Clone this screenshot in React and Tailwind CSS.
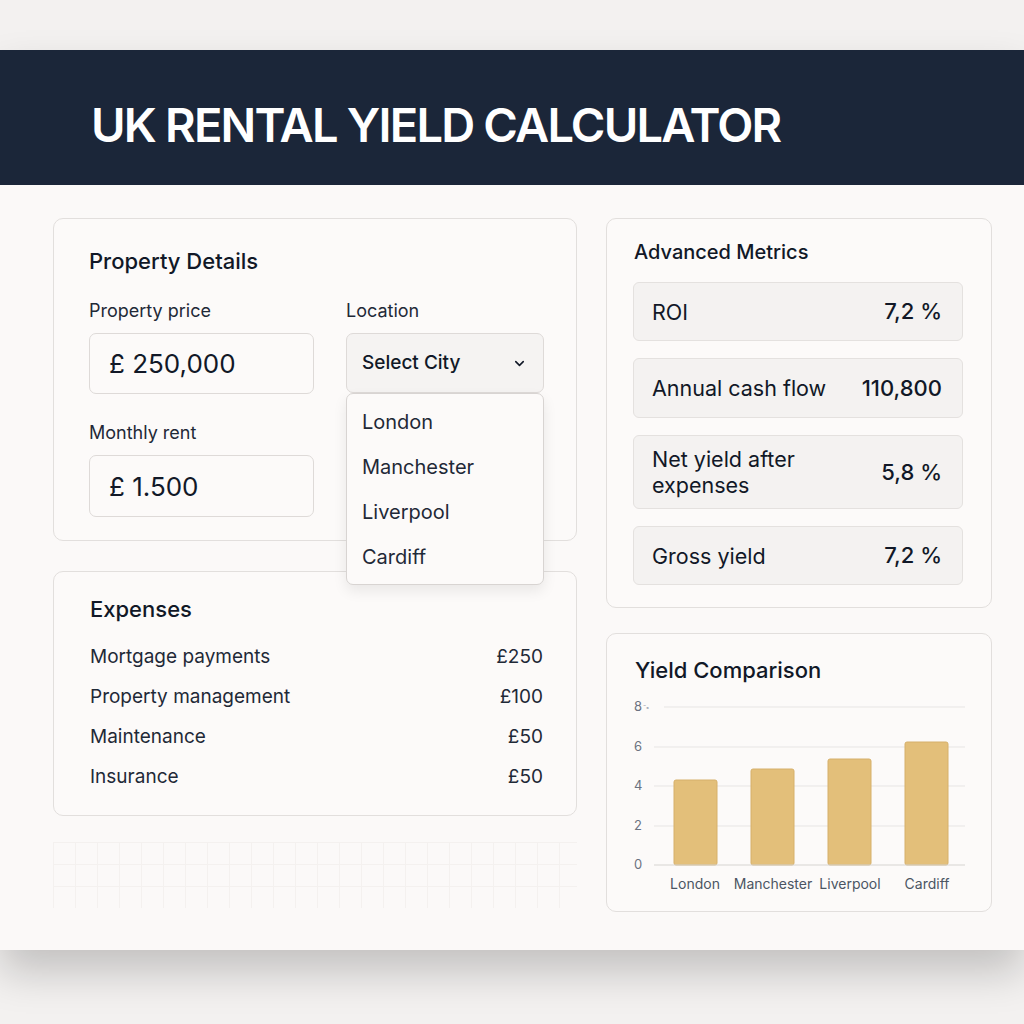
import React from 'react';
import { ChevronDown } from 'lucide-react';

const cities = ['London', 'Manchester', 'Liverpool', 'Cardiff'];

const expenses = [
    { label: 'Mortgage payments', value: '£250' },
    { label: 'Property management', value: '£100' },
    { label: 'Maintenance', value: '£50' },
    { label: 'Insurance', value: '£50' },
];

const metrics = [
    { label: 'ROI', value: '7,2 %', h: 'h-[59px]' },
    { label: 'Annual cash flow', value: '110,800', h: 'h-[60px]' },
    { label: 'Net yield after expenses', value: '5,8 %', h: 'h-[74px]' },
    { label: 'Gross yield', value: '7,2 %', h: 'h-[59px]' },
];

const bars = [
    { name: 'London', x: 47, top: 83, cx: 68 },
    { name: 'Manchester', x: 124, top: 72, cx: 146 },
    { name: 'Liverpool', x: 201, top: 62, cx: 223 },
    { name: 'Cardiff', x: 278, top: 45, cx: 300 },
];

const ticks = [
    { label: '8', y: 10, x1: 37 },
    { label: '6', y: 50, x1: 27 },
    { label: '4', y: 89, x1: 27 },
    { label: '2', y: 129, x1: 27 },
];

const YieldChart = () => (
    <svg width="360" height="202" className="mt-[13px] ml-[20px] block">
        {ticks.map((t) => (
            <g key={t.label}>
                <line x1={t.x1} x2="338" y1={t.y} y2={t.y} stroke="#e7e5e4" strokeWidth="1" />
                <text x="7" y={t.y} dominantBaseline="middle" fontSize="13" fill="#6b7280">{t.label}</text>
            </g>
        ))}
        <text x="16" y="9" dominantBaseline="middle" fontSize="7" fill="#9ca3af">-ₛ</text>
        {bars.map((b) => (
            <rect key={b.name} x={b.x} y={b.top} width="43" height={168 - b.top} rx="2" fill="#e3bf7a" stroke="#d6b06a" strokeWidth="1" />
        ))}
        <line x1="27" x2="338" y1="168" y2="168" stroke="#d6d3d1" strokeWidth="1.2" />
        <text x="7" y="168" dominantBaseline="middle" fontSize="13" fill="#6b7280">0</text>
        {bars.map((b) => (
            <text key={b.name} x={b.cx} y="188" textAnchor="middle" dominantBaseline="middle" fontSize="14" fill="#4b5563">{b.name}</text>
        ))}
    </svg>
);

const App = () => {
    return (
        <div className="min-h-screen bg-[#f3f1f0] pt-[50px] font-['Inter',sans-serif] text-[#111827]">
            <div className="h-[900px] bg-[#fbf9f8] shadow-[0_22px_40px_rgba(0,0,0,0.2)]">
                {/* Header */}
                <div className="h-[135px] bg-[#1b2639] flex items-center pl-[91px] pt-[14px]">
                    <h1 className="text-white text-[47px] font-semibold tracking-[-1.8px] leading-none">UK RENTAL YIELD CALCULATOR</h1>
                </div>

                <div className="flex gap-[29px] pl-[53px] pt-[33px]">
                    {/* Left column */}
                    <div className="w-[524px] flex flex-col">
                        <div className="relative z-10 h-[323px] rounded-[10px] border border-[#e2dfdd] bg-[#fcfaf9] pl-[35px] pr-[32px] pt-[28px]">
                            <h2 className="text-[22px] leading-[28px] font-medium">Property Details</h2>
                            <div className="mt-[24px] flex gap-[32px]">
                                <div className="w-[225px] flex flex-col">
                                    <label className="text-[18px] leading-[24px] text-[#1f2937]">Property price</label>
                                    <div className="mt-[10px] h-[61px] rounded-[7px] border border-[#dedad8] bg-[#fcfaf9] flex items-center pl-[19px] text-[26px] text-[#111827]">£ 250,000</div>
                                    <label className="mt-[27px] text-[18px] leading-[24px] text-[#1f2937]">Monthly rent</label>
                                    <div className="mt-[10px] h-[62px] rounded-[7px] border border-[#dedad8] bg-[#fcfaf9] flex items-center pl-[19px] text-[26px] text-[#111827]">£ 1.500</div>
                                </div>
                                <div className="w-[198px] flex flex-col">
                                    <label className="text-[18px] leading-[24px] text-[#1f2937]">Location</label>
                                    <div className="relative mt-[10px]">
                                        <div className="h-[60px] rounded-[7px] border border-[#dedad8] bg-[#f5f3f2] flex items-center justify-between pl-[15px] pr-[16px]">
                                            <span className="text-[19px] font-medium">Select City</span>
                                            <ChevronDown className="w-[15px] h-[15px] text-[#111827]" strokeWidth={2.5} />
                                        </div>
                                        <div className="absolute left-0 top-full w-[198px] rounded-[7px] border border-[#d8d4d2] bg-[#fcfaf9] py-[5px] shadow-[0_6px_14px_rgba(0,0,0,0.08)]">
                                            {cities.map((c) => (
                                                <div key={c} className="h-[45px] flex items-center pl-[15px] text-[20px] text-[#1f2937]">{c}</div>
                                            ))}
                                        </div>
                                    </div>
                                </div>
                            </div>
                        </div>

                        <div className="mt-[30px] h-[245px] rounded-[10px] border border-[#e2dfdd] bg-[#fcfaf9] pl-[36px] pr-[33px] pt-[23px]">
                            <h2 className="text-[22px] leading-[28px] font-medium">Expenses</h2>
                            <div className="mt-[14px] flex flex-col">
                                {expenses.map((e) => (
                                    <div key={e.label} className="h-[40px] flex items-center justify-between text-[19px] text-[#1f2937]">
                                        <span>{e.label}</span>
                                        <span>{e.value}</span>
                                    </div>
                                ))}
                            </div>
                        </div>

                        <div className="mt-[26px] h-[66px] bg-[linear-gradient(to_right,#f4f1ef_1px,transparent_1px),linear-gradient(to_bottom,#f4f1ef_1px,transparent_1px)] bg-[size:22px_22px]" />
                    </div>

                    {/* Right column */}
                    <div className="w-[386px] flex flex-col">
                        <div className="h-[390px] rounded-[10px] border border-[#e2dfdd] bg-[#fcfaf9] pl-[26px] pr-[28px] pt-[19px]">
                            <h2 className="pl-[1px] text-[20px] leading-[28px] font-medium">Advanced Metrics</h2>
                            <div className="mt-[16px] flex flex-col gap-[17px]">
                                {metrics.map((m) => (
                                    <div key={m.label} className={`${m.h} rounded-[6px] border border-[#e4e1df] bg-[#f4f2f1] flex items-center justify-between pl-[18px] pr-[20px] text-[21.5px] text-[#111827]`}>
                                        <span className="w-[190px] leading-[26px]">{m.label}</span>
                                        <span className="text-[22px] font-medium">{m.value}</span>
                                    </div>
                                ))}
                            </div>
                        </div>

                        <div className="mt-[25px] h-[279px] rounded-[10px] border border-[#e2dfdd] bg-[#fcfaf9] pt-[22px]">
                            <h2 className="pl-[28px] text-[22px] leading-[28px] font-medium">Yield Comparison</h2>
                            <YieldChart />
                        </div>
                    </div>
                </div>
            </div>
        </div>
    );
};

export default App;
